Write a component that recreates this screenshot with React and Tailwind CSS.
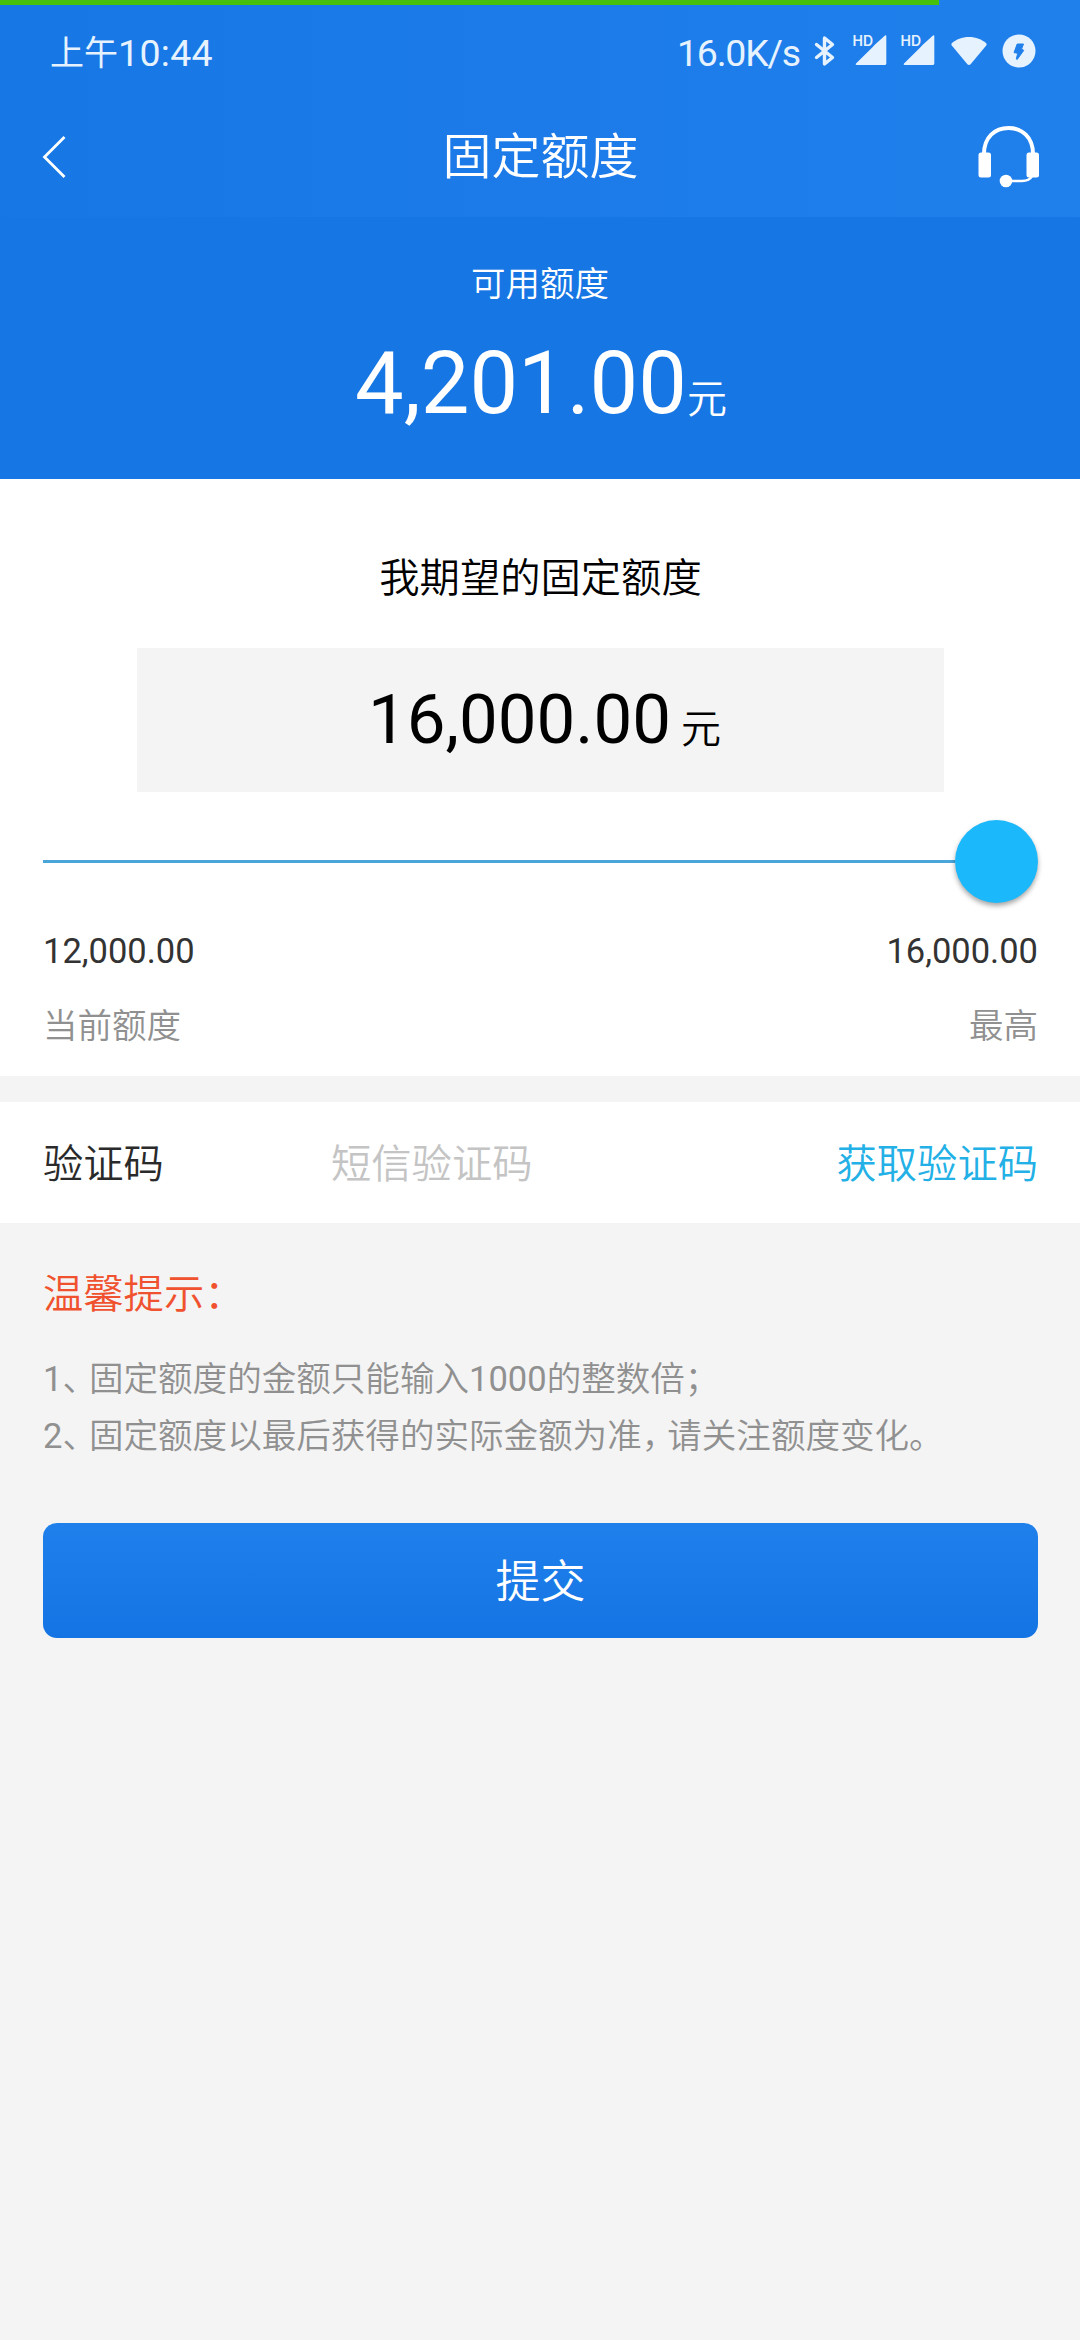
import React, { useState } from 'react';

const MIN = 12000;
const MAX = 16000;

const format = (n) => n.toLocaleString('en-US', { minimumFractionDigits: 2 });

function Bluetooth() {
    return (
        <svg width="22" height="32" viewBox="0 0 22 32" fill="none" stroke="currentColor" strokeWidth="3.4" strokeLinejoin="round" strokeLinecap="round">
            <path d="M2.5 9.5 L18.5 22.5 L10.5 29 V3 L18.5 9.5 L2.5 22.5" />
        </svg>
    );
}

function Signal() {
    return (
        <svg width="35" height="34" viewBox="0 0 35 34" fill="currentColor" className="overflow-visible">
            <text x="0.5" y="12.4" fontSize="14" fontWeight="600" fontFamily="Inter, sans-serif" textLength="20.5">HD</text>
            <path d="M33 1.4 Q34.3 0.8 34.3 2.2 V29.4 Q34.3 31 32.6 31 H4.6 Q2.8 31 4 29.6 L20.5 13.2 L22.5 11 Z" />
        </svg>
    );
}

function Wifi() {
    return (
        <svg width="36" height="30" viewBox="0 0 36 30" fill="currentColor">
            <path d="M18 1 C25 1 31 3.6 35 7 Q36.2 8.2 35.2 9.6 L19.6 28.2 Q18 29.8 16.4 28.2 L0.8 9.6 Q-0.2 8.2 1 7 C5 3.6 11 1 18 1 Z" />
        </svg>
    );
}

function Charging() {
    return (
        <svg width="34" height="34" viewBox="0 0 34 34">
            <circle cx="17" cy="17" r="16.5" fill="currentColor" />
            <path d="M15.2 10 L21.5 10 L19.5 15.3 L21.8 16.3 L15.2 25.5 L14.3 24.9 L15.7 19.3 L12 18.6 Z" fill="#1f80ec" stroke="#1f80ec" strokeLinejoin="round" />
        </svg>
    );
}

function Headset() {
    return (
        <svg width="62" height="62" viewBox="0 0 62 62" fill="none" stroke="white">
            <path d="M6 28 C6 11 17 2 30.5 2 C44 2 55 11 55 28" strokeWidth="4" />
            <rect x="0.5" y="26.5" width="12.5" height="25" rx="2.5" fill="white" stroke="none" />
            <rect x="48.5" y="26.5" width="12.5" height="25" rx="2.5" fill="white" stroke="none" />
            <path d="M54 50 C52 54 49 55 44 55 H30" strokeWidth="2.6" />
            <circle cx="28" cy="55" r="6.3" fill="white" stroke="none" />
        </svg>
    );
}

function StatusBar() {
    return (
        <div>
            <div className="h-[5px] w-[939px] bg-[#46c00c]" />
            <div className="flex h-[91px] items-center justify-between pl-[50px] pr-[44px] font-normal text-[#e6f3ff]">
                <div className="flex items-center whitespace-nowrap pt-[4px] text-[37.5px] leading-[48px]">
                    <span className="text-[34px]">上午</span>
                    <span className="tracking-[0.3px]">10:44</span>
                </div>
                <div className="flex items-center">
                    <span className="mr-[14px] pt-[4px] text-[37.5px] leading-[48px] tracking-[-1.2px]">16.0K/s</span>
                    <div className="mr-[16px]"><Bluetooth /></div>
                    <div className="mr-[13px]"><Signal /></div>
                    <div className="mr-[16px]"><Signal /></div>
                    <div className="mr-[15px]"><Wifi /></div>
                    <Charging />
                </div>
            </div>
        </div>
    );
}

export default function App() {
    const [amount] = useState(16000);
    const [code, setCode] = useState('');

    const percent = ((amount - MIN) / (MAX - MIN)) * 100;

    return (
        <div className="flex h-[2340px] w-[1080px] flex-col overflow-hidden bg-[#f4f4f4] font-['Roboto','Noto_Sans_CJK_SC',sans-serif] font-[350]">
            {/* Header */}
            <header className="h-[217px] bg-gradient-to-r from-[#1677e5] via-[#1c7be8] to-[#1f80ec] text-white">
                <StatusBar />
                <div className="grid h-[121px] grid-cols-[1fr_auto_1fr] items-center pl-[41px] pr-[40px]">
                    <button type="button" className="justify-self-start">
                        <svg width="26" height="44" viewBox="0 0 26 44" fill="none" stroke="white" strokeWidth="2.8">
                            <path d="M23.5 2 L3.5 22 L23.5 42" />
                        </svg>
                    </button>
                    <h1 className="pt-[2px] text-[49px] font-[350] leading-[60px]">固定额度</h1>
                    <button type="button" className="justify-self-end">
                        <Headset />
                    </button>
                </div>
            </header>

            {/* Available credit */}
            <section className="flex h-[262px] flex-col items-center bg-[#1676e4] text-white">
                <div className="mt-[42px] text-[34.5px] leading-[50px]">可用额度</div>
                <div className="mt-[25px] flex items-baseline pl-[2px] leading-[100px]">
                    <span className="text-[86.6px] font-normal">4,201.00</span>
                    <span className="text-[40px]">元</span>
                </div>
            </section>

            {/* Expected amount */}
            <section className="h-[597px] bg-white pl-[43px] pr-[42px]">
                <div className="pt-[70px] text-center text-[40.3px] leading-[60px] text-black">我期望的固定额度</div>
                <div className="mx-auto mt-[39px] flex h-[144px] w-[807px] items-baseline justify-center bg-[#f4f4f4] pl-[8px] leading-[144px] text-black">
                    <span className="text-[69px] font-normal">16,000.00</span>
                    <span className="ml-[10px] text-[40px]">元</span>
                </div>
                <div className="mt-[28px] flex h-[83px] items-center">
                    <div className="h-[3px] bg-[#4aa5d8]" style={{ width: `calc(${percent}% - 83px)` }} />
                    <div className="h-[83px] w-[83px] rounded-full bg-[#1bb8fb] shadow-[0_3px_5px_rgba(0,0,0,0.35)]" />
                </div>
                <div className="mt-[23px] flex justify-between text-[34.5px] font-normal leading-[50px] text-[#333]">
                    <span>{format(MIN)}</span>
                    <span>{format(MAX)}</span>
                </div>
                <div className="mt-[25px] flex justify-between text-[34.5px] leading-[50px] text-[#909090]">
                    <span>当前额度</span>
                    <span>最高</span>
                </div>
            </section>

            {/* SMS code */}
            <section className="mt-[26px] flex h-[121px] items-center bg-white pl-[43px] pr-[42px] pt-[6px] text-[40.3px]">
                <label htmlFor="code" className="w-[288px] text-[#2a2a2a]">验证码</label>
                <input
                    id="code" name="code" type="text"
                    className="min-w-0 flex-1 bg-transparent placeholder-[#c4c4c4] outline-none"
                    placeholder="短信验证码" value={code} onChange={(e) => setCode(e.target.value)}
                />
                <button type="button" className="text-[#22b0e6]">获取验证码</button>
            </section>

            {/* Tips */}
            <section className="px-[43px] pt-[42px]">
                <h2 className="text-[40.3px] font-[350] leading-[60px] text-[#f0522f]">温馨提示：</h2>
                <div className="mt-[26px] text-[34.55px] leading-[57px] text-[#909090]">
                    <p>
                        <span className="font-normal">1</span>
                        <span className="tracking-[-8px]">、</span>
                        固定额度的金额只能输入<span className="font-normal">1000</span>的整数倍；
                    </p>
                    <p>
                        <span className="font-normal">2</span>
                        <span className="tracking-[-8px]">、</span>
                        固定额度以最后获得的实际金额为准<span className="tracking-[-9px]">，</span>请关注额度变化。
                    </p>
                </div>
            </section>

            <button
                type="button"
                className="ml-[43px] mr-[42px] mt-[58px] h-[115px] rounded-[14px] bg-gradient-to-b from-[#1f80ec] to-[#1574e3] pt-[4px] text-[45px] text-white"
            >
                提交
            </button>
        </div>
    );
}
